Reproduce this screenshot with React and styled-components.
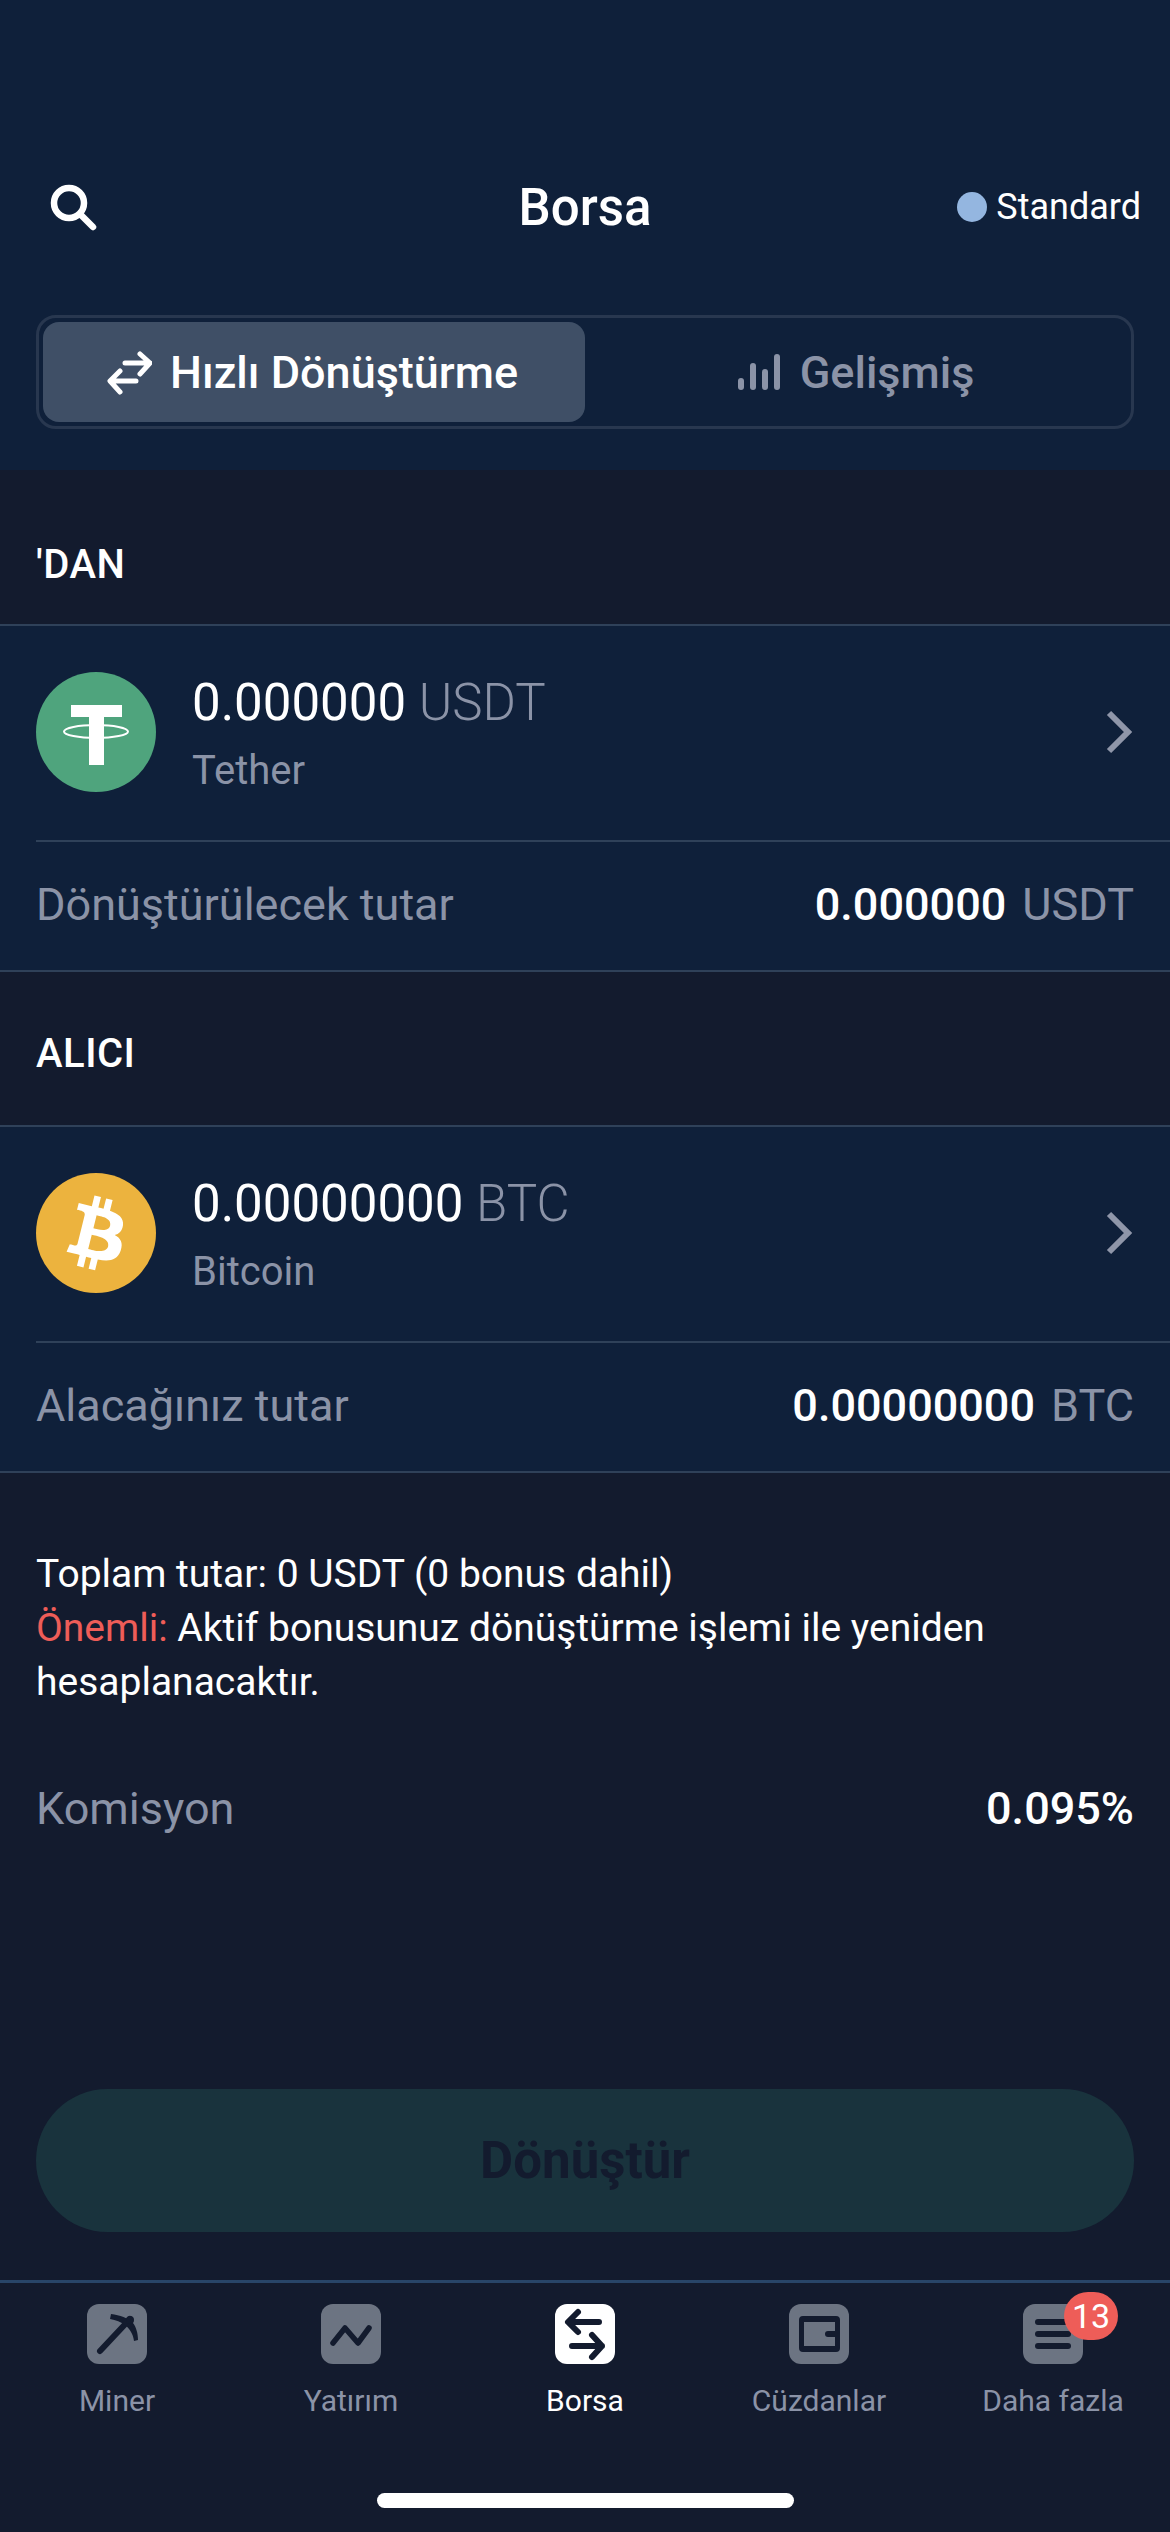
import React from 'react';
import styled, { createGlobalStyle } from 'styled-components';

const Global = createGlobalStyle`
  html, body { margin: 0; padding: 0; background: #131b2e; }
  * { box-sizing: border-box; }
`;

const SearchIcon = () => (
  <svg width="50" height="50" viewBox="0 0 50 50" fill="none" stroke="#fff" strokeWidth="6.5" strokeLinecap="round">
    <circle cx="21" cy="21" r="15" />
    <path d="M32 32l13 13" />
  </svg>
);

const SwapIcon = () => (
  <svg width="46" height="46" viewBox="0 0 46 46" fill="none" stroke="#fff" strokeWidth="5" strokeLinecap="round" strokeLinejoin="round">
    <path d="M19 14h25M34 5l10 9-10 11" />
    <path d="M30 32H5M14 22L4 32l10 11" />
  </svg>
);

const BarsIcon = () => (
  <svg width="42" height="36" viewBox="0 0 42 36" fill="#8b93a7">
    <rect x="0" y="24" width="6" height="12" rx="3" />
    <rect x="12" y="9" width="6" height="27" rx="3" />
    <rect x="24" y="15" width="6" height="21" rx="3" />
    <rect x="36" y="0" width="6" height="36" rx="3" />
  </svg>
);

const Chevron = () => (
  <svg width="28" height="44" viewBox="0 0 28 44" fill="none" stroke="#8f96a9" strokeWidth="6">
    <path d="M3 3l19 19L3 41" />
  </svg>
);

const TetherLogo = () => (
  <svg width="120" height="120" viewBox="0 0 120 120">
    <circle cx="60" cy="60" r="60" fill="#4fa47d" />
    <path d="M35 33h51v12H68v48H53V45H35z" fill="#fff" />
    <ellipse cx="60" cy="59.5" rx="32" ry="6.5" fill="none" stroke="#fff" strokeWidth="2" />
  </svg>
);

const BitcoinLogo = () => (
  <svg width="120" height="120" viewBox="0 0 32 32">
    <circle cx="16" cy="16" r="16" fill="#ecb33e" />
    <path
      fill="#fff"
      d="M23.189 14.02c.314-2.096-1.283-3.223-3.465-3.975l.708-2.84-1.728-.43-.69 2.765c-.454-.114-.92-.22-1.385-.326l.695-2.783L15.596 6l-.708 2.839c-.376-.086-.746-.17-1.104-.26l.002-.009-2.384-.595-.46 1.846s1.283.294 1.256.312c.7.175.826.638.805 1.006l-.806 3.235c.048.012.11.03.18.057l-.183-.045-1.13 4.532c-.086.212-.303.531-.793.41.018.025-1.256-.313-1.256-.313l-.858 1.978 2.25.561c.418.105.828.215 1.231.318l-.715 2.872 1.727.43.708-2.84c.472.127.93.245 1.378.357l-.706 2.828 1.728.43.715-2.866c2.948.558 5.164.333 6.097-2.333.752-2.146-.037-3.385-1.588-4.192 1.13-.26 1.98-1.003 2.207-2.538zm-3.95 5.538c-.533 2.147-4.148.986-5.32.695l.95-3.805c1.172.293 4.929.872 4.37 3.11zm.535-5.569c-.487 1.953-3.495.96-4.47.717l.86-3.45c.975.243 4.118.696 3.61 2.733z"
    />
  </svg>
);

const Pick = () => (
  <svg width="60" height="60" viewBox="0 0 60 60" fill="#131b2e">
    <path d="M13 47l30-32" fill="none" stroke="#131b2e" strokeWidth="6" strokeLinecap="round" />
    <path d="M24 10c9 1 17 4 22 9 3 4 5 10 5 17l-4 1c-1-7-4-12-9-16-4-3-9-5-15-6z" />
    <circle cx="43" cy="16" r="4" />
  </svg>
);

const Trend = () => (
  <svg width="60" height="60" viewBox="0 0 60 60" fill="none" stroke="#131b2e" strokeWidth="5.5" strokeLinecap="round" strokeLinejoin="round">
    <path d="M12 39l12-15 13 15 11-15" />
  </svg>
);

const Exchange = () => (
  <svg width="60" height="60" viewBox="0 0 60 60" fill="none" stroke="#131b2e" strokeWidth="6" strokeLinecap="round" strokeLinejoin="round">
    <path d="M44 18H14M23 8L13 18l10 10" />
    <path d="M17 42h30M37 31l10 11-10 11" />
  </svg>
);

const Wallet = () => (
  <svg width="60" height="60" viewBox="0 0 60 60">
    <path
      fill="#131b2e"
      fillRule="evenodd"
      d="M14 12h33a4 4 0 0 1 4 4v28a4 4 0 0 1-4 4H14a4 4 0 0 1-4-4V16a4 4 0 0 1 4-4zm1 6v24h31v-9h-7a3 3 0 0 1 0-6h7v-9z"
    />
  </svg>
);

const Menu = () => (
  <svg width="60" height="60" viewBox="0 0 60 60" fill="#131b2e">
    <rect x="12" y="15" width="36" height="6" rx="3" />
    <rect x="12" y="27" width="36" height="6" rx="3" />
    <rect x="12" y="39" width="36" height="6" rx="3" />
  </svg>
);

const tabs = [
  { label: 'Miner', icon: <Pick /> },
  { label: 'Yatırım', icon: <Trend /> },
  { label: 'Borsa', icon: <Exchange />, active: true },
  { label: 'Cüzdanlar', icon: <Wallet /> },
  { label: 'Daha fazla', icon: <Menu />, badge: 13 },
];

const App = () => {
  return (
    <Page>
      <Global />
      <Top>
        <Header>
          <SearchButton><SearchIcon /></SearchButton>
          <Title>Borsa</Title>
          <Plan>
            <PlanDot />
            Standard
          </Plan>
        </Header>
        <Segment>
          <SegmentItem $active>
            <SwapIcon />
            Hızlı Dönüştürme
          </SegmentItem>
          <SegmentItem>
            <BarsIcon />
            Gelişmiş
          </SegmentItem>
        </Segment>
      </Top>

      <SectionLabel $height={154} $top={34}>'DAN</SectionLabel>
      <Panel>
        <CoinRow>
          <TetherLogo />
          <CoinText>
            <CoinAmount>0.000000 <span>USDT</span></CoinAmount>
            <CoinName>Tether</CoinName>
          </CoinText>
          <Chevron />
        </CoinRow>
        <AmountRow>
          <Muted>Dönüştürülecek tutar</Muted>
          <AmountValue>0.000000<span>USDT</span></AmountValue>
        </AmountRow>
      </Panel>

      <SectionLabel $height={153} $top={9}>ALICI</SectionLabel>
      <Panel>
        <CoinRow>
          <BitcoinLogo />
          <CoinText>
            <CoinAmount>0.00000000 <span>BTC</span></CoinAmount>
            <CoinName>Bitcoin</CoinName>
          </CoinText>
          <Chevron />
        </CoinRow>
        <AmountRow>
          <Muted>Alacağınız tutar</Muted>
          <AmountValue>0.00000000<span>BTC</span></AmountValue>
        </AmountRow>
      </Panel>

      <Note>
        Toplam tutar: 0 USDT (0 bonus dahil)
        <br />
        <Red>Önemli:</Red> Aktif bonusunuz dönüştürme işlemi ile yeniden hesaplanacaktır.
      </Note>

      <FeeRow>
        <Muted>Komisyon</Muted>
        <FeeValue>0.095%</FeeValue>
      </FeeRow>

      <ConvertButton>Dönüştür</ConvertButton>

      <TabBar>
        {tabs.map((t) => (
          <Tab key={t.label} $active={t.active}>
            <TabIcon $active={t.active}>
              {t.icon}
              {t.badge && <Badge>{t.badge}</Badge>}
            </TabIcon>
            {t.label}
          </Tab>
        ))}
      </TabBar>
      <HomeBar />
    </Page>
  );
};

export default App;

const Page = styled.div`
  width: 1170px;
  height: 2532px;
  overflow: hidden;
  background: #131b2e;
  color: #fff;
  font-family: Roboto, "Liberation Sans", sans-serif;
`;

const Top = styled.div`
  height: 470px;
  background: #0f203a;
  padding: 168px 36px 0;
`;

const Header = styled.div`
  display: grid;
  grid-template-columns: 1fr auto 1fr;
  align-items: center;
  height: 78px;
  margin-right: -7px;
`;

const SearchButton = styled.div`
  display: flex;
  padding-left: 12px;
`;

const Title = styled.div`
  font-size: 51px;
  font-weight: 500;
  margin-right: 7px;
`;

const Plan = styled.div`
  display: flex;
  align-items: center;
  justify-content: flex-end;
  gap: 9px;
  font-size: 36px;
`;

const PlanDot = styled.span`
  width: 30px;
  height: 30px;
  border-radius: 50%;
  background: #94b6e0;
`;

const Segment = styled.div`
  display: grid;
  grid-template-columns: 1fr 1fr;
  height: 114px;
  margin-top: 69px;
  padding: 4px;
  border: 3px solid #28374f;
  border-radius: 20px;
`;

const SegmentItem = styled.div`
  display: flex;
  align-items: center;
  justify-content: center;
  gap: ${(p) => (p.$active ? '18px' : '20px')};
  padding-right: ${(p) => (p.$active ? '4px' : '0')};
  border-radius: 16px;
  font-size: 45px;
  font-weight: 500;
  color: ${(p) => (p.$active ? '#fff' : '#8b93a7')};
  background: ${(p) => (p.$active ? '#3f4f66' : 'transparent')};
`;

const SectionLabel = styled.div`
  display: flex;
  align-items: center;
  height: ${(p) => p.$height}px;
  padding: ${(p) => p.$top}px 36px 0;
  font-size: 40px;
  font-weight: 500;
  letter-spacing: 0.5px;
`;

const Panel = styled.div`
  background: #0f203a;
  border-top: 2px solid #2f4159;
  border-bottom: 2px solid #2f4159;
`;

const CoinRow = styled.div`
  display: flex;
  align-items: center;
  height: 214px;
  padding: 0 36px 2px;
  svg { flex: none; }
`;

const CoinText = styled.div`
  flex: 1;
  margin-left: 36px;
  padding-top: 2px;
`;

const CoinAmount = styled.div`
  font-size: 51px;
  line-height: 60px;
  span { color: #8b93a7; font-weight: 300; }
`;

const CoinName = styled.div`
  margin-top: 16px;
  font-size: 40px;
  line-height: 44px;
  color: #8b93a7;
`;

const AmountRow = styled.div`
  display: flex;
  align-items: center;
  justify-content: space-between;
  height: 130px;
  margin-left: 36px;
  padding: 0 36px 3px 0;
  border-top: 2px solid #2f4159;
`;

const Muted = styled.span`
  font-size: 45px;
  color: #8b93a7;
`;

const AmountValue = styled.span`
  font-size: 45px;
  font-weight: 500;
  span { margin-left: 16px; color: #8b93a7; font-weight: 400; }
`;

const Note = styled.div`
  margin-top: 74px;
  padding: 0 36px;
  font-size: 39px;
  line-height: 54px;
`;

const Red = styled.span`
  color: #ee5d58;
`;

const FeeRow = styled.div`
  display: flex;
  justify-content: space-between;
  align-items: center;
  margin-top: 69px;
  padding: 0 36px;
  height: 60px;
`;

const FeeValue = styled.span`
  font-size: 45px;
  font-weight: 500;
`;

const ConvertButton = styled.div`
  display: flex;
  align-items: center;
  justify-content: center;
  height: 143px;
  margin: 251px 36px 0;
  border-radius: 72px;
  background: #19333d;
  color: #131b2e;
  font-size: 51px;
  font-weight: 700;
`;

const TabBar = styled.div`
  display: grid;
  grid-template-columns: repeat(5, 1fr);
  margin-top: 48px;
  height: 160px;
  padding: 21px 0 0;
  border-top: 3px solid #284568;
`;

const Tab = styled.div`
  display: flex;
  flex-direction: column;
  align-items: center;
  gap: 19px;
  font-size: 30px;
  color: ${(p) => (p.$active ? '#fff' : '#8b93a7')};
`;

const TabIcon = styled.div`
  position: relative;
  width: 60px;
  height: 60px;
  border-radius: 12px;
  background: ${(p) => (p.$active ? '#fff' : '#6c7482')};
`;

const Badge = styled.span`
  position: absolute;
  top: -12px;
  right: -35px;
  width: 54px;
  height: 48px;
  border-radius: 24px;
  background: #ee5d58;
  color: #fff;
  font-size: 34px;
  line-height: 48px;
  text-align: center;
`;

const HomeBar = styled.div`
  width: 417px;
  height: 15px;
  margin: 53px 0 0 377px;
  border-radius: 8px;
  background: #fff;
`;
